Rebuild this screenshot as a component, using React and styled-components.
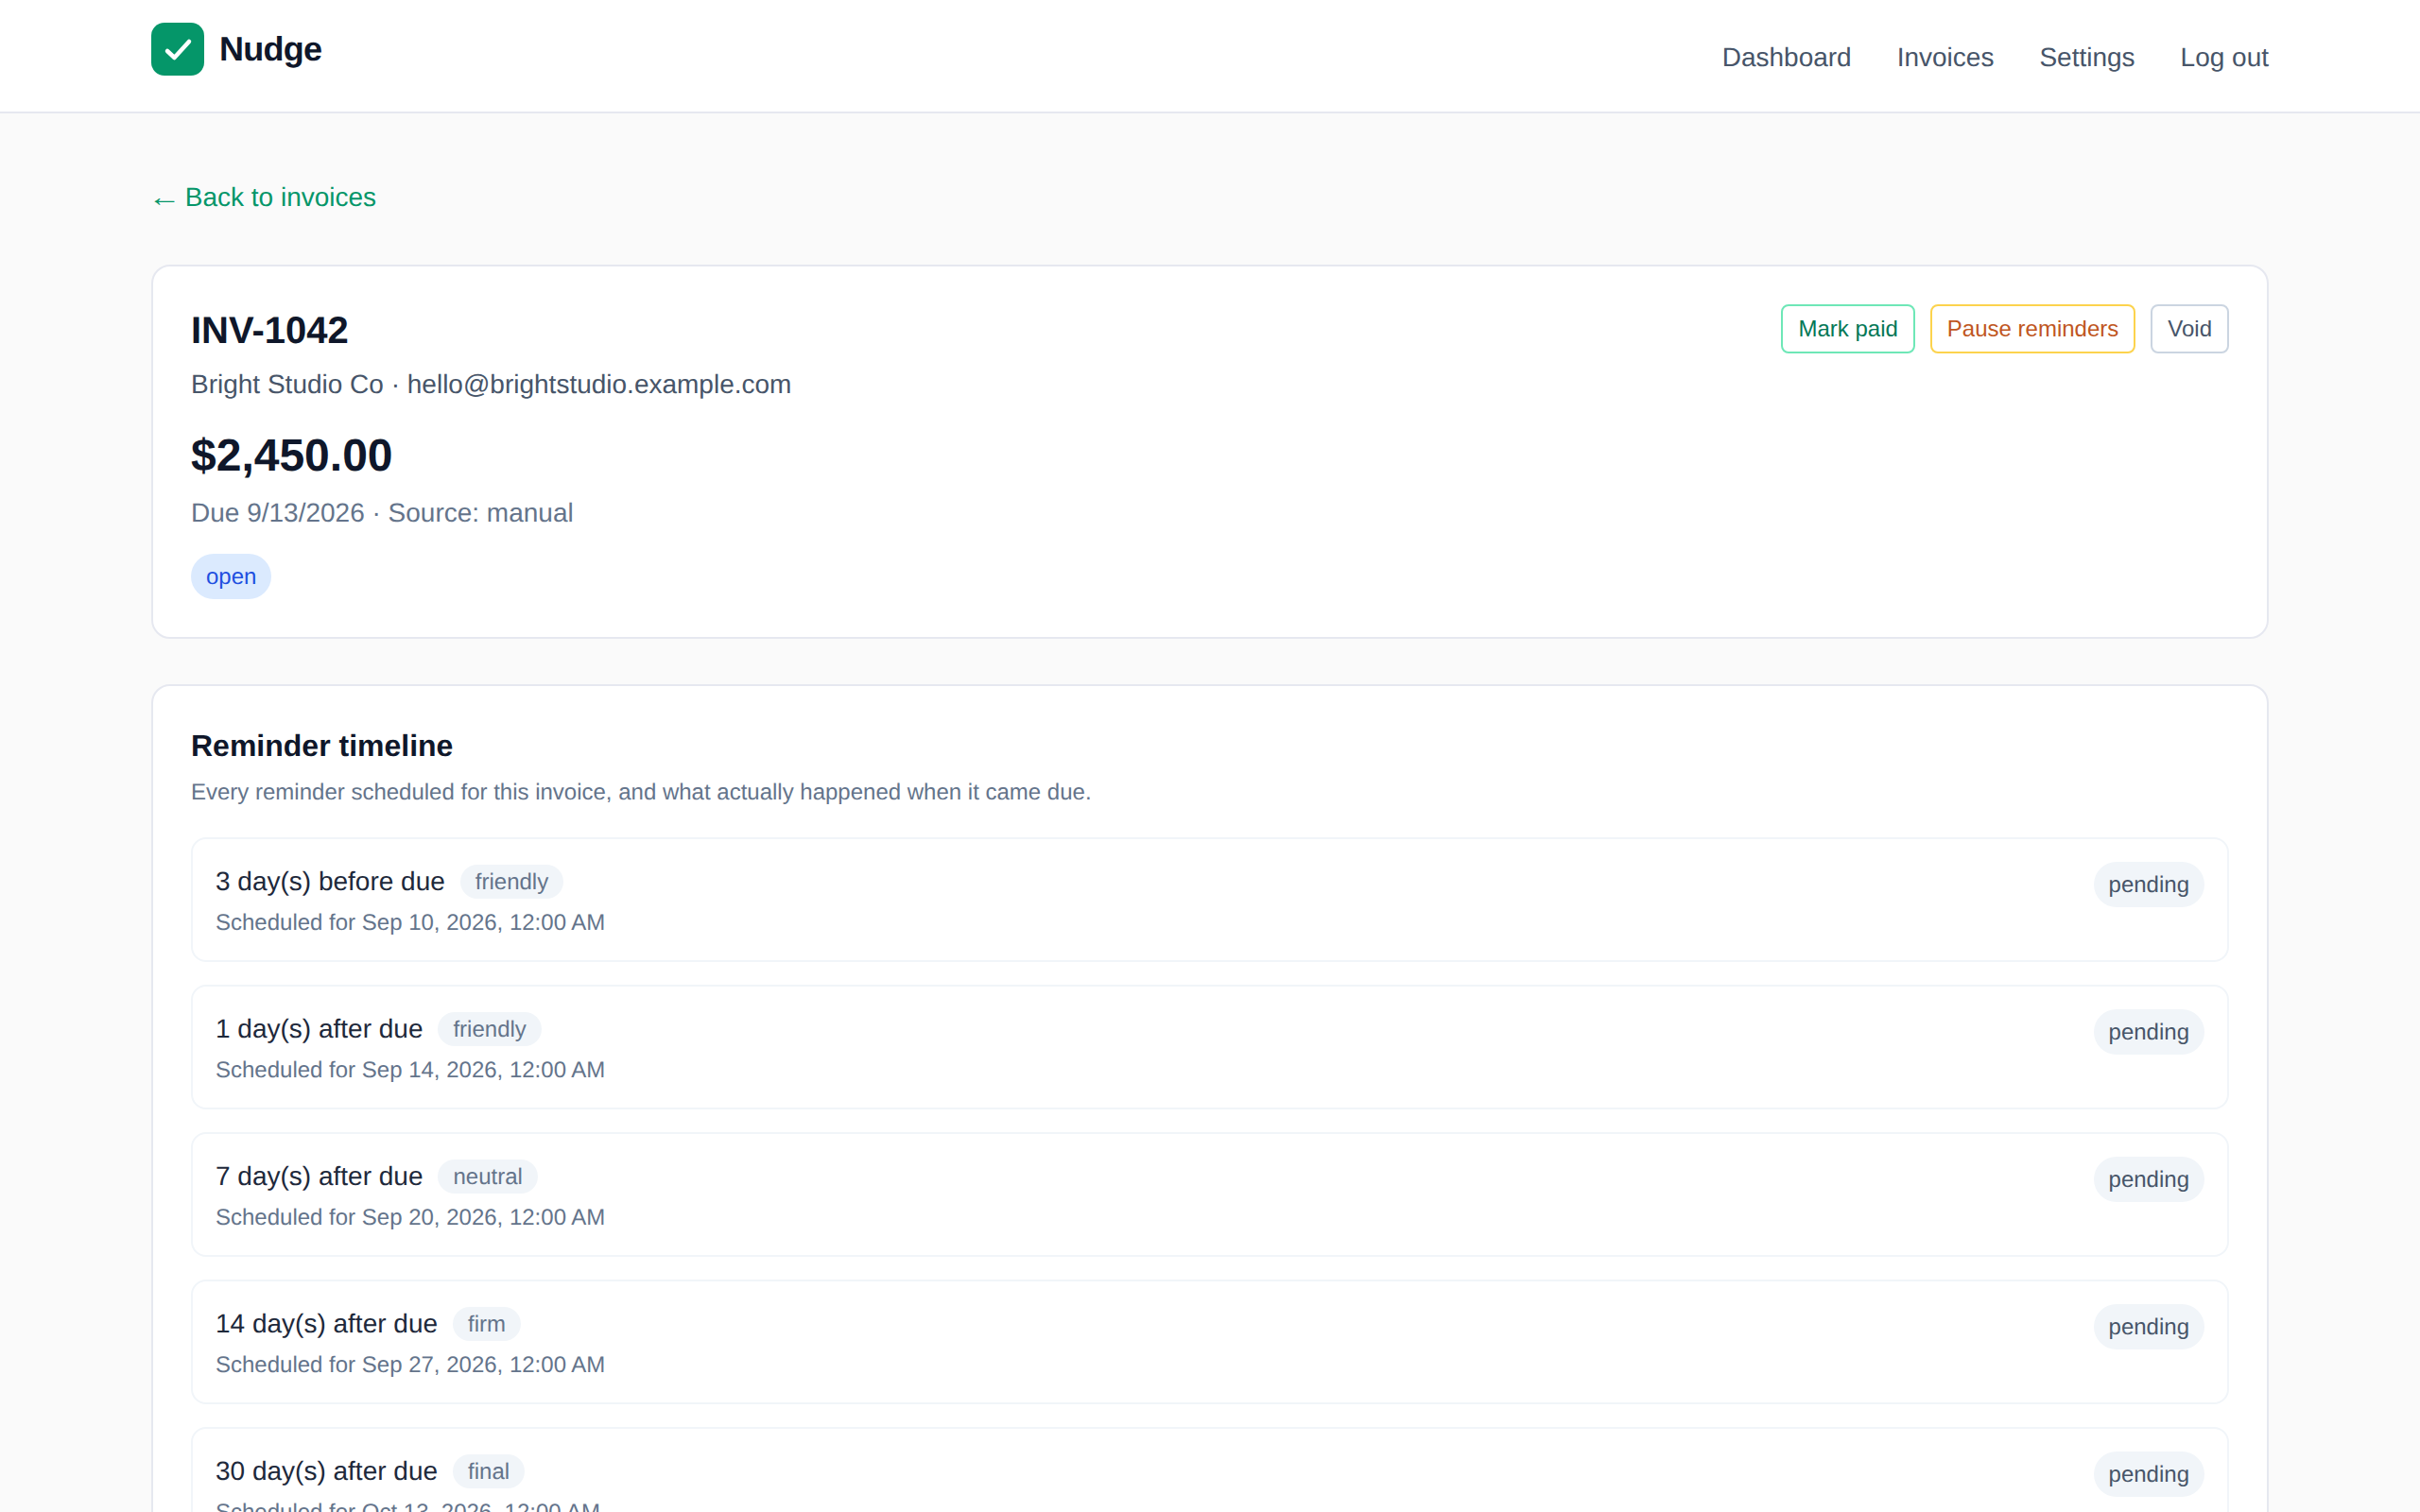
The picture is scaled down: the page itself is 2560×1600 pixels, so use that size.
import React from "react";
import styled, { createGlobalStyle } from "styled-components";

const GlobalStyle = createGlobalStyle`
  * {
    box-sizing: border-box;
  }
  body {
    margin: 0;
    background: #fafafa;
    color: #0f172a;
    font-family: "Liberation Sans", Arial, sans-serif;
    text-rendering: geometricPrecision;
  }
`;

const Header = styled.header`
  display: flex;
  justify-content: space-between;
  align-items: flex-start;
  height: 120px;
  padding: 24px 160px 0;
  background: #ffffff;
  border-bottom: 2px solid #e6e8f0;
`;

const Brand = styled.a`
  display: flex;
  align-items: center;
  gap: 16px;
  font-size: 36px;
  font-weight: 700;
  letter-spacing: -0.72px;
  color: #0f172a;
`;

const Logo = styled.svg`
  width: 56px;
  height: 56px;
  display: block;
`;

const Nav = styled.nav`
  display: flex;
  gap: 48px;
  padding-top: 16px;
`;

const NavLink = styled.a`
  font-size: 28px;
  line-height: 42px;
  color: #475569;
`;

const Main = styled.main`
  display: flex;
  flex-direction: column;
  gap: 48px;
  padding: 68px 160px 64px;
`;

const BackLink = styled.a`
  display: block;
  height: 42px;
  margin-bottom: 2px;
  font-size: 28px;
  line-height: 42px;
  color: #059669;
`;

const BackArrow = styled.span`
  display: inline-block;
  transform: scaleX(1.25);
`;

const Card = styled.section`
  padding: 40px;
  background: #ffffff;
  border: 2px solid #e6e8f0;
  border-radius: 20px;
`;

const InvoiceTop = styled.div`
  display: flex;
  justify-content: space-between;
  align-items: flex-start;
`;

const InvoiceNumber = styled.h1`
  margin: 0;
  font-size: 40px;
  line-height: 56px;
  font-weight: 700;
  color: #0f172a;
`;

const Client = styled.p`
  margin: 8px 0 0;
  font-size: 28px;
  line-height: 42px;
  color: #475569;
`;

const Amount = styled.div`
  margin-top: 24px;
  font-size: 48px;
  line-height: 62px;
  font-weight: 700;
  color: #0f172a;
`;

const DueLine = styled.p`
  margin: 8px 0 22px;
  font-size: 28px;
  line-height: 42px;
  color: #64748b;
`;

const Actions = styled.div`
  display: flex;
  gap: 16px;
`;

const tones = {
  green: { border: "#6ee7b7", text: "#047857" },
  amber: { border: "#fcd34d", text: "#c05621" },
  slate: { border: "#cbd5e1", text: "#475569" },
};

const ActionButton = styled.button`
  height: 52px;
  padding: 0 16px;
  background: #ffffff;
  border: 2px solid ${(p) => tones[p.$tone].border};
  border-radius: 8px;
  color: ${(p) => tones[p.$tone].text};
  font-family: inherit;
  font-size: 24px;
`;

const Pill = styled.span`
  display: inline-block;
  padding: ${(p) => (p.$small ? "3px 16px 1px" : "9px 16px 7px")};
  border-radius: 999px;
  background: ${(p) => (p.$blue ? "#dbeafe" : "#f1f5f9")};
  color: ${(p) => (p.$blue ? "#1f4fe0" : p.$small ? "#64748b" : "#475569")};
  font-size: 24px;
  line-height: 32px;
  vertical-align: middle;
`;

const SectionTitle = styled.h2`
  margin: 0;
  font-size: 32px;
  line-height: 46px;
  font-weight: 700;
  color: #0f172a;
`;

const SectionHint = styled.p`
  margin: 8px 0 28px;
  font-size: 24px;
  line-height: 38px;
  color: #64748b;
`;

const Timeline = styled.div`
  display: flex;
  flex-direction: column;
  gap: 24px;
`;

const Row = styled.div`
  display: flex;
  justify-content: space-between;
  align-items: flex-start;
  height: 132px;
  padding: 24px;
  border: 2px solid #f1f5f9;
  border-radius: 16px;
`;

const RowTitle = styled.div`
  display: flex;
  align-items: center;
  gap: 16px;
  height: 42px;
  font-size: 28px;
  color: #1e293b;
`;

const RowDate = styled.div`
  margin-top: 6px;
  font-size: 24px;
  line-height: 34px;
  color: #64748b;
`;

const reminders = [
  { label: "3 day(s) before due", tone: "friendly", date: "Sep 10, 2026" },
  { label: "1 day(s) after due", tone: "friendly", date: "Sep 14, 2026" },
  { label: "7 day(s) after due", tone: "neutral", date: "Sep 20, 2026" },
  { label: "14 day(s) after due", tone: "firm", date: "Sep 27, 2026" },
  { label: "30 day(s) after due", tone: "final", date: "Oct 13, 2026" },
];

function App() {
  return (
    <>
      <GlobalStyle />
      <Header>
        <Brand>
          <Logo viewBox="0 0 56 56">
            <rect width="56" height="56" rx="14" fill="#059669" />
            <path
              d="M17 30L24.5 37L40 20"
              fill="none"
              stroke="#ffffff"
              strokeWidth="4.5"
              strokeLinecap="round"
              strokeLinejoin="round"
            />
          </Logo>
          Nudge
        </Brand>
        <Nav>
          <NavLink>Dashboard</NavLink>
          <NavLink>Invoices</NavLink>
          <NavLink>Settings</NavLink>
          <NavLink>Log out</NavLink>
        </Nav>
      </Header>
      <Main>
        <BackLink>
          <BackArrow>←</BackArrow> Back to invoices
        </BackLink>
        <Card>
          <InvoiceTop>
            <div>
              <InvoiceNumber>INV-1042</InvoiceNumber>
              <Client>Bright Studio Co · hello@brightstudio.example.com</Client>
              <Amount>$2,450.00</Amount>
              <DueLine>Due 9/13/2026 · Source: manual</DueLine>
              <Pill $blue>open</Pill>
            </div>
            <Actions>
              <ActionButton $tone="green">Mark paid</ActionButton>
              <ActionButton $tone="amber">Pause reminders</ActionButton>
              <ActionButton $tone="slate">Void</ActionButton>
            </Actions>
          </InvoiceTop>
        </Card>
        <Card>
          <SectionTitle>Reminder timeline</SectionTitle>
          <SectionHint>
            Every reminder scheduled for this invoice, and what actually happened when it came due.
          </SectionHint>
          <Timeline>
            {reminders.map((r) => (
              <Row key={r.label}>
                <div>
                  <RowTitle>
                    {r.label}
                    <Pill $small>{r.tone}</Pill>
                  </RowTitle>
                  <RowDate>Scheduled for {r.date}, 12:00 AM</RowDate>
                </div>
                <Pill>pending</Pill>
              </Row>
            ))}
          </Timeline>
        </Card>
      </Main>
    </>
  );
}

export default App;
